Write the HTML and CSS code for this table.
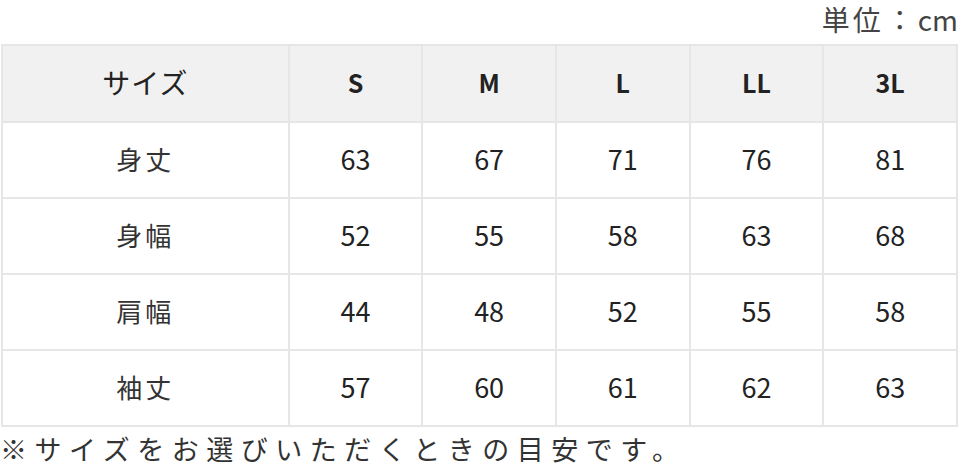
FILE: index.html
```html
<!DOCTYPE html>
<html lang="ja">
<head>
<meta charset="utf-8">
<link rel="stylesheet" href="styles.css">
</head>
<body>
<div class="unit"><span class="unit-label">単位</span><span class="colon">：</span>cm</div>
<table class="size-table">
  <colgroup>
    <col class="col-label">
    <col class="col-size"><col class="col-size"><col class="col-size"><col class="col-size"><col class="col-size">
  </colgroup>
  <thead>
    <tr><th class="label">サイズ</th><th>S</th><th>M</th><th>L</th><th>LL</th><th>3L</th></tr>
  </thead>
  <tbody>
    <tr><td class="label">身丈</td><td>63</td><td>67</td><td>71</td><td>76</td><td>81</td></tr>
    <tr><td class="label">身幅</td><td>52</td><td>55</td><td>58</td><td>63</td><td>68</td></tr>
    <tr><td class="label">肩幅</td><td>44</td><td>48</td><td>52</td><td>55</td><td>58</td></tr>
    <tr><td class="label">袖丈</td><td>57</td><td>60</td><td>61</td><td>62</td><td>63</td></tr>
  </tbody>
</table>
<p class="note">※サイズをお選びいただくときの目安です。</p>
</body>
</html>
```
FILE: styles.css
```css
html, body {
  margin: 0;
  padding: 0;
  background: #fff;
}
body {
  width: 960px;
  font-family: "Noto Sans CJK JP", "Noto Sans", sans-serif;
  color: #333;
}
.unit {
  height: 44px;
  text-align: right;
  font-size: 28px;
  line-height: 38px;
  color: #444;
  padding-right: 2px;
  box-sizing: border-box;
  white-space: nowrap;
}
.unit-label {
  letter-spacing: 3px;
}
.colon {
  margin: 0 4px 0 2px;
}
.size-table {
  margin-left: 1px;
  width: 957px;
  border-collapse: collapse;
  table-layout: fixed;
}
.col-label {
  width: 286px;
}
.col-size {
  width: 133.4px;
}
.size-table th,
.size-table td {
  border: 2px solid #e6e6e6;
  text-align: center;
  vertical-align: middle;
  padding: 0 0 4px 0;
}
.size-table thead th {
  height: 71px;
  background: #f1f1f1;
  font-size: 25px;
  font-weight: 700;
  color: #222;
}
.size-table thead th.label {
  font-weight: 400;
  font-size: 28px;
  letter-spacing: 1px;
}
.size-table tbody td {
  height: 70px;
  font-size: 27px;
  color: #222;
}
.size-table tbody td.label {
  letter-spacing: 3px;
  font-size: 26px;
  color: #333;
}
.note {
  margin: 7px 0 0 0;
  font-size: 27px;
  line-height: 30px;
  letter-spacing: 7.5px;
  color: #333;
  white-space: nowrap;
}
```
